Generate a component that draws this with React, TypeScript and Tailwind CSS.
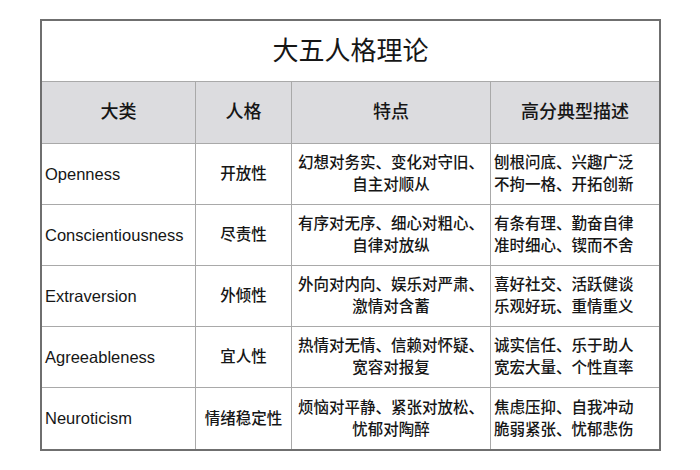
const rows = [
  {
    en: "Openness",
    cn: "开放性",
    trait: ["幻想对务实、变化对守旧、", "自主对顺从"],
    desc: ["刨根问底、兴趣广泛", "不拘一格、开拓创新"],
  },
  {
    en: "Conscientiousness",
    cn: "尽责性",
    trait: ["有序对无序、细心对粗心、", "自律对放纵"],
    desc: ["有条有理、勤奋自律", "准时细心、锲而不舍"],
  },
  {
    en: "Extraversion",
    cn: "外倾性",
    trait: ["外向对内向、娱乐对严肃、", "激情对含蓄"],
    desc: ["喜好社交、活跃健谈", "乐观好玩、重情重义"],
  },
  {
    en: "Agreeableness",
    cn: "宜人性",
    trait: ["热情对无情、信赖对怀疑、", "宽容对报复"],
    desc: ["诚实信任、乐于助人", "宽宏大量、个性直率"],
  },
  {
    en: "Neuroticism",
    cn: "情绪稳定性",
    trait: ["烦恼对平静、紧张对放松、", "忧郁对陶醉"],
    desc: ["焦虑压抑、自我冲动", "脆弱紧张、忧郁悲伤"],
  },
];

const font = "font-['Liberation_Sans','Noto_Sans_CJK_SC',sans-serif]";

export default function App() {
  return (
    <div className={`w-[700px] h-[470px] bg-white pt-[19px] pl-[40px] text-[#161616] font-medium ${font}`}>
      <div className="w-[621px] border-2 border-[#6f6f6f]">
        <div className="h-[61px] flex items-center justify-center text-[26px] font-normal border-b border-[#a9a9a9]">
          大五人格理论
        </div>
        <div className="grid grid-cols-[154px_96px_199px_1fr] bg-[#dcdcdf] h-[62px] items-stretch text-[18px] border-b border-[#a9a9a9]">
          <div className="flex items-center justify-center border-r border-[#a9a9a9]">大类</div>
          <div className="flex items-center justify-center border-r border-[#a9a9a9]">人格</div>
          <div className="flex items-center justify-center border-r border-[#a9a9a9]">特点</div>
          <div className="flex items-center justify-center">高分典型描述</div>
        </div>
        {rows.map((r, i) => (
          <div
            key={r.en}
            className={`grid grid-cols-[154px_96px_199px_1fr] h-[61px] ${i < rows.length - 1 ? "border-b border-[#a9a9a9]" : ""}`}
          >
            <div className="flex items-center pl-[3px] text-[16.5px] border-r border-[#a9a9a9]">{r.en}</div>
            <div className="flex items-center justify-center text-[15.5px] border-r border-[#a9a9a9]">{r.cn}</div>
            <div className="flex flex-col justify-center items-center text-[15.5px] leading-[22px] border-r border-[#a9a9a9]">
              {r.trait.map((t) => (
                <div key={t}>{t}</div>
              ))}
            </div>
            <div className="flex flex-col justify-center pl-[3px] text-[15.5px] leading-[22px]">
              {r.desc.map((t) => (
                <div key={t}>{t}</div>
              ))}
            </div>
          </div>
        ))}
      </div>
    </div>
  );
}
